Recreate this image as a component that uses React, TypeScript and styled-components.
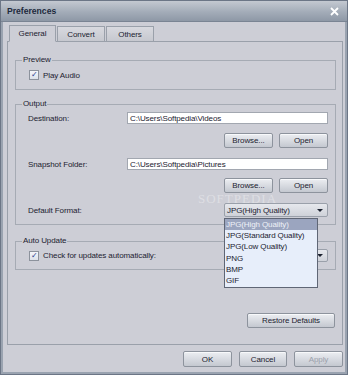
import React from "react";
import styled, { createGlobalStyle } from "styled-components";

const GlobalStyle = createGlobalStyle`
  html, body {
    margin: 0;
    padding: 0;
    background: #ffffff;
  }
  body {
    font-family: "Liberation Sans", Arial, sans-serif;
    font-size: 8px;
    letter-spacing: -0.1px;
    color: #1c2230;
  }
`;

const Window = styled.div`
  width: 346px;
  height: 373px;
  background: #cdced6;
  border: 1px solid #6c7686;
  box-shadow: inset 2px 0 0 #9aa3b0, inset -2px 0 0 #9aa3b0, inset 0 -2px 0 #9aa3b0;
  display: flex;
  flex-direction: column;
  overflow: hidden;
`;

const TitleBar = styled.div`
  height: 20px;
  flex: none;
  display: flex;
  align-items: center;
  justify-content: space-between;
  padding: 0 6px 0 6px;
  background: linear-gradient(#c4c9d1, #a3acb8 55%, #8e98a6);
  border-bottom: 1px solid #7a8493;
`;

const Title = styled.span`
  font-weight: bold;
  font-size: 8.6px;
  letter-spacing: 0;
  color: #1e2a3c;
`;

const CloseIcon = styled.svg`
  width: 9px;
  height: 9px;
  margin-right: 2px;
`;

const Body = styled.div`
  flex: 1;
  display: flex;
  flex-direction: column;
  padding: 3px 4px 5px 6px;
`;

const TabRow = styled.div`
  display: flex;
  height: 16px;
  padding-left: 2px;
  align-items: flex-end;
`;

const Tab = styled.div<{ $active?: boolean }>`
  width: ${({ $active }) => ($active ? 47 : 48)}px;
  height: ${({ $active }) => ($active ? 17 : 15)}px;
  box-sizing: border-box;
  display: flex;
  align-items: center;
  justify-content: center;
  border: 1px solid #9aa0aa;
  border-bottom: ${({ $active }) => ($active ? "1px solid #cdced6" : "none")};
  background: ${({ $active }) =>
    $active ? "#cdced6" : "linear-gradient(#d8d9df, #c6c8cf)"};
  margin-right: 1px;
  position: relative;
  z-index: ${({ $active }) => ($active ? 2 : 1)};
  margin-bottom: ${({ $active }) => ($active ? "-1px" : "0")};
`;

const Panel = styled.div`
  width: 336px;
  height: 304px;
  box-sizing: border-box;
  border: 1px solid #9aa0aa;
  padding: 18px 6px 0 7px;
  display: flex;
  flex-direction: column;
`;

const Group = styled.div<{ $pad: string; $top?: number }>`
  position: relative;
  padding: ${({ $pad }) => $pad};
  margin-top: ${({ $top = 0 }) => $top}px;
  border: 1px solid #a6abb4;
`;

const Legend = styled.span`
  position: absolute;
  top: -6px;
  left: 6px;
  padding: 0 1px;
  line-height: 10px;
  background: #cdced6;
`;

const CheckRow = styled.label`
  display: flex;
  align-items: center;
  gap: 4px;
  height: 10px;
`;

const Box = styled.span`
  width: 8px;
  height: 8px;
  border: 1px solid #8c929c;
  background: linear-gradient(#f4f6fa, #dde2ea);
  display: inline-flex;
  align-items: center;
  justify-content: center;
  font-size: 8px;
  color: #2b3f8f;
  line-height: 1;
`;

const FieldRow = styled.div<{ $h: number; $top?: number }>`
  display: flex;
  align-items: center;
  height: ${({ $h }) => $h}px;
  margin-top: ${({ $top = 0 }) => $top}px;
`;

const Label = styled.span`
  width: 99px;
  flex: none;
`;

const TextBox = styled.div`
  flex: 1;
  height: 100%;
  box-sizing: border-box;
  background: #ffffff;
  border: 1px solid #a2a7b0;
  padding: 0 2px;
  display: flex;
  align-items: center;
  white-space: nowrap;
  overflow: hidden;
`;

const ButtonRow = styled.div<{ $top: number; $h?: number }>`
  display: flex;
  justify-content: flex-end;
  gap: 6px;
  height: ${({ $h = 15 }) => $h}px;
  margin-top: ${({ $top }) => $top}px;
`;

const Button = styled.div<{ $w: number; $disabled?: boolean }>`
  width: ${({ $w }) => $w}px;
  height: 100%;
  box-sizing: border-box;
  border: 1px solid #8d939d;
  border-radius: 2px;
  background: linear-gradient(#eceef2, #d8dbe1 50%, #c4c8d0);
  box-shadow: inset 0 1px 0 #f8f9fb;
  display: flex;
  align-items: center;
  justify-content: center;
  color: ${({ $disabled }) => ($disabled ? "#9ba1ab" : "#1c2230")};
`;

const SelectWrap = styled.div`
  position: relative;
  width: 104px;
  height: 100%;
  margin-left: auto;
`;

const SelectBox = styled.div`
  height: 100%;
  box-sizing: border-box;
  border: 1px solid #9aa0aa;
  border-radius: 2px;
  background: linear-gradient(#e6e8ed, #cfd2d9);
  display: flex;
  align-items: center;
  justify-content: space-between;
  padding: 0 4px 0 2px;
`;

const Arrow = styled.span`
  width: 0;
  height: 0;
  border-left: 3px solid transparent;
  border-right: 3px solid transparent;
  border-top: 3px solid #1c2230;
`;

const DropList = styled.div`
  position: absolute;
  top: 100%;
  left: 0;
  width: 94px;
  margin-top: 1px;
  box-sizing: border-box;
  border: 1px solid #5f6675;
  background: #e7eefa;
  z-index: 10;
  padding-bottom: 1px;
`;

const DropItem = styled.div<{ $sel?: boolean }>`
  height: 11.2px;
  line-height: 11.2px;
  padding-left: 1px;
  white-space: nowrap;
  background: ${({ $sel }) => ($sel ? "#9ba5bf" : "transparent")};
  color: ${({ $sel }) => ($sel ? "#eef1f7" : "#1c2230")};
`;

const Watermark = styled.span`
  position: absolute;
  left: -26px;
  top: -12px;
  font-family: "Liberation Serif", serif;
  font-size: 13px;
  letter-spacing: 1px;
  color: rgba(255, 255, 255, 0.35);
  pointer-events: none;
`;

const Footer = styled.div`
  display: flex;
  justify-content: flex-end;
  gap: 7px;
  margin-top: 6px;
  height: 16px;
`;

const formats = [
  "JPG(High Quality)",
  "JPG(Standard Quality)",
  "JPG(Low Quality)",
  "PNG",
  "BMP",
  "GIF",
];

export default function App() {
  return (
    <>
      <GlobalStyle />
      <Window>
        <TitleBar>
          <Title>Preferences</Title>
          <CloseIcon viewBox="0 0 9 9">
            <path d="M1 1 L8 8 M8 1 L1 8" stroke="#ffffff" strokeWidth="1.8" />
          </CloseIcon>
        </TitleBar>
        <Body>
          <TabRow>
            <Tab $active>General</Tab>
            <Tab>Convert</Tab>
            <Tab>Others</Tab>
          </TabRow>
          <Panel>
            <Group $pad="9px 13px 9px 13px">
              <Legend>Preview</Legend>
              <CheckRow>
                <Box>✓</Box>
                Play Audio
              </CheckRow>
            </Group>

            <Group $pad="7px 7px 7px 12px" $top={14}>
              <Legend>Output</Legend>
              <FieldRow $h={12}>
                <Label>Destination:</Label>
                <TextBox>C:\Users\Softpedia\Videos</TextBox>
              </FieldRow>
              <ButtonRow $top={9}>
                <Button $w={49}>Browse...</Button>
                <Button $w={49}>Open</Button>
              </ButtonRow>
              <FieldRow $h={12} $top={10}>
                <Label>Snapshot Folder:</Label>
                <TextBox>C:\Users\Softpedia\Pictures</TextBox>
              </FieldRow>
              <ButtonRow $top={8}>
                <Button $w={49}>Browse...</Button>
                <Button $w={49}>Open</Button>
              </ButtonRow>
              <FieldRow $h={14} $top={10}>
                <Label>Default Format:</Label>
                <SelectWrap>
                  <Watermark>SOFTPEDIA</Watermark>
                  <SelectBox>
                    JPG(High Quality)
                    <Arrow />
                  </SelectBox>
                  <DropList>
                    {formats.map((f, i) => (
                      <DropItem key={f} $sel={i === 0}>
                        {f}
                      </DropItem>
                    ))}
                  </DropList>
                </SelectWrap>
              </FieldRow>
            </Group>

            <Group $pad="7px 7px 7px 13px" $top={16}>
              <Legend>Auto Update</Legend>
              <FieldRow $h={13}>
                <CheckRow>
                  <Box>✓</Box>
                  Check for updates automatically:
                </CheckRow>
                <SelectWrap>
                  <SelectBox>
                    <span />
                    <Arrow />
                  </SelectBox>
                </SelectWrap>
              </FieldRow>
            </Group>

            <ButtonRow $top={43} style={{ paddingRight: 1 }}>
              <Button $w={88}>Restore Defaults</Button>
            </ButtonRow>
          </Panel>
          <Footer>
            <Button $w={49}>OK</Button>
            <Button $w={48}>Cancel</Button>
            <Button $w={49} $disabled>
              Apply
            </Button>
          </Footer>
        </Body>
      </Window>
    </>
  );
}
